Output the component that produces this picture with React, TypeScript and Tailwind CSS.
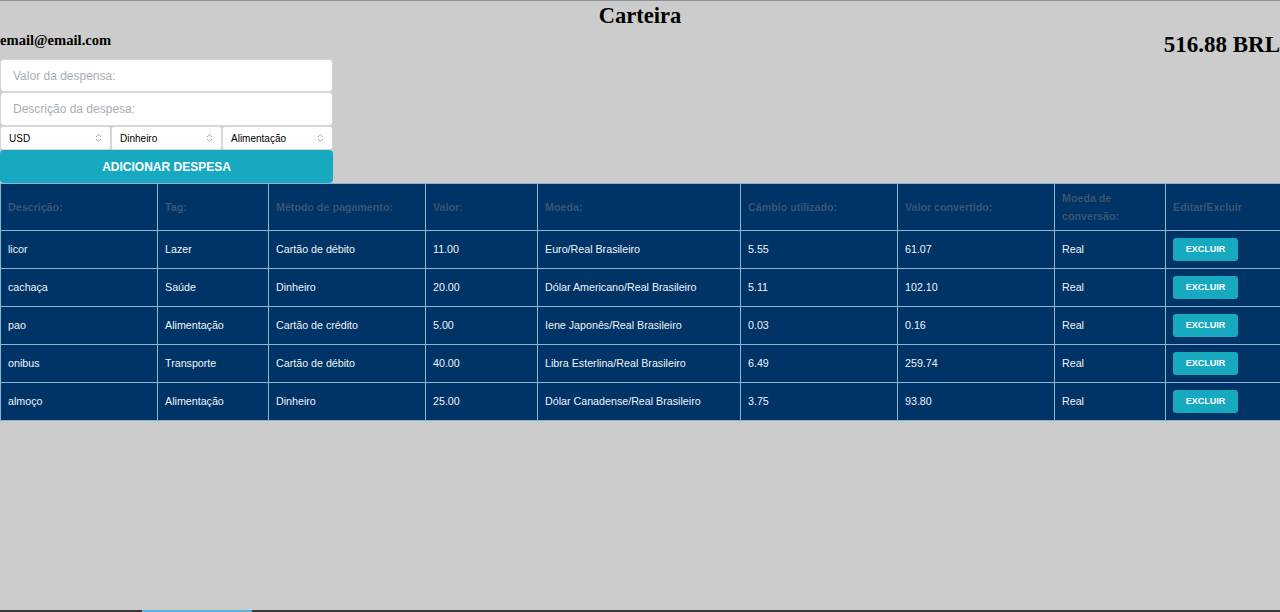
import React from "react";

const rows = [
  ["licor", "Lazer", "Cartão de débito", "11.00", "Euro/Real Brasileiro", "5.55", "61.07", "Real"],
  ["cachaça", "Saúde", "Dinheiro", "20.00", "Dólar Americano/Real Brasileiro", "5.11", "102.10", "Real"],
  ["pao", "Alimentação", "Cartão de crédito", "5.00", "Iene Japonês/Real Brasileiro", "0.03", "0.16", "Real"],
  ["onibus", "Transporte", "Cartão de débito", "40.00", "Libra Esterlina/Real Brasileiro", "6.49", "259.74", "Real"],
  ["almoço", "Alimentação", "Dinheiro", "25.00", "Dólar Canadense/Real Brasileiro", "3.75", "93.80", "Real"],
];

const headers = [
  "Descrição:",
  "Tag:",
  "Método de pagamento:",
  "Valor:",
  "Moeda:",
  "Câmbio utilizado:",
  "Valor convertido:",
  "Moeda de conversão:",
  "Editar/Excluir",
];

const widths = [157, 111, 157, 112, 203, 157, 157, 111, 115];

function Chevrons() {
  return (
    <svg width="7" height="10" viewBox="0 0 7 10" className="text-[#9aa0a6]">
      <path d="M1 4 L3.5 1.5 L6 4" fill="none" stroke="currentColor" strokeWidth="0.9" />
      <path d="M1 6 L3.5 8.5 L6 6" fill="none" stroke="currentColor" strokeWidth="0.9" />
    </svg>
  );
}

function FakeSelect({ label }: { label: string }) {
  return (
    <div className="flex h-6 flex-1 items-center justify-between rounded-[3px] border border-[#d6d6d6] bg-white pl-2 pr-2 text-[10px] text-black">
      <span>{label}</span>
      <Chevrons />
    </div>
  );
}

export default function App() {
  return (
    <div className="flex h-[612px] flex-col overflow-hidden bg-[#cccccc] font-['Liberation_Sans',Arial,sans-serif]">
      <div className="flex-1 border-t border-[#8e9393]">
        <h1 className="h-8 text-center font-['Liberation_Serif',serif] text-[22.5px] font-bold leading-[30px] text-black">
          Carteira
        </h1>
        <div className="flex h-[26px] items-start justify-between font-['Liberation_Serif',serif] font-bold text-black">
          <span className="text-[14.6px] leading-[14px]">email@email.com</span>
          <span className="text-[23px] leading-[24px]">516.88 BRL</span>
        </div>

        <form className="flex w-[333px] flex-col">
          <input
            placeholder="Valor da despensa:"
            className="h-[33px] rounded-[4px] border border-[#d6d6d6] bg-white px-3 text-[12px] placeholder:text-[#a8aeb4] outline-none"
          />
          <input
            placeholder="Descrição da despesa:"
            className="h-[34px] rounded-[4px] border border-[#d6d6d6] bg-white px-3 text-[12px] placeholder:text-[#a8aeb4] outline-none"
          />
          <div className="flex">
            <FakeSelect label="USD" />
            <FakeSelect label="Dinheiro" />
            <FakeSelect label="Alimentação" />
          </div>
          <button
            type="button"
            className="h-[33px] rounded-[4px] bg-[#17a9c0] text-[12px] font-bold text-white"
          >
            ADICIONAR DESPESA
          </button>
        </form>

        <table className="w-full table-fixed border-collapse bg-[#003366] text-[10.7px]">
          <colgroup>
            {widths.map((w, i) => (
              <col key={i} style={{ width: w }} />
            ))}
          </colgroup>
          <thead>
            <tr className="h-[47px]">
              {headers.map((h) => (
                <th
                  key={h}
                  className="border border-[#8fb4d6] px-[7px] text-left align-middle font-bold leading-[18px] text-[#3a5473]"
                >
                  {h}
                </th>
              ))}
            </tr>
          </thead>
          <tbody>
            {rows.map((r) => (
              <tr key={r[0]} className="h-[38px]">
                {r.map((c, i) => (
                  <td key={i} className="border border-[#8fb4d6] px-[7px] align-middle text-[#eef3f8]">
                    {c}
                  </td>
                ))}
                <td className="border border-[#8fb4d6] px-[7px] align-middle">
                  <button
                    type="button"
                    className="h-[23px] w-[65px] rounded-[3px] bg-[#17a9c0] text-[9px] font-bold text-white"
                  >
                    EXCLUIR
                  </button>
                </td>
              </tr>
            ))}
          </tbody>
        </table>
      </div>
      <div className="flex h-[2px] bg-[#3a3a3a]">
        <div className="ml-[142px] w-[110px] bg-[#5ab0e0]" />
      </div>
    </div>
  );
}
